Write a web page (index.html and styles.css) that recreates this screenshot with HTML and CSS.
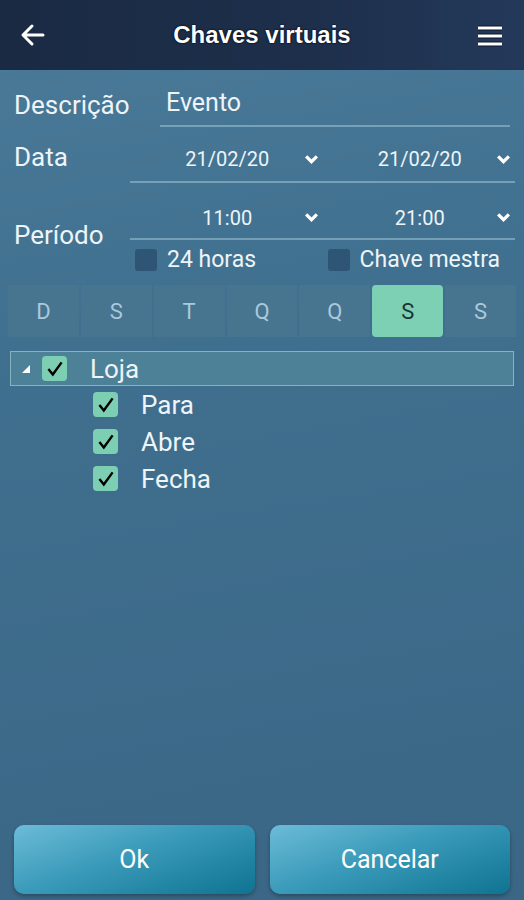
FILE: index.html
```html
<!DOCTYPE html>
<html>
<head>
  <link rel="stylesheet" href="styles.css">
</head>
<body>
  <div class="header">
    <svg class="back" width="26" height="26" viewBox="0 0 26 26">
      <path d="M23 13 H4 M12 4 L3 13 L12 22" stroke="white" stroke-width="3" fill="none" stroke-linecap="round" stroke-linejoin="round"/>
    </svg>
    <div class="title">Chaves virtuais</div>
    <svg class="menu" width="28" height="24" viewBox="0 0 28 24">
      <g stroke="#0d1626" stroke-width="5">
        <line x1="2" y1="4" x2="26" y2="4"/>
        <line x1="2" y1="12" x2="26" y2="12"/>
        <line x1="2" y1="20" x2="26" y2="20"/>
      </g>
      <g stroke="white" stroke-width="3">
        <line x1="2" y1="4" x2="26" y2="4"/>
        <line x1="2" y1="12" x2="26" y2="12"/>
        <line x1="2" y1="20" x2="26" y2="20"/>
      </g>
    </svg>
  </div>

  <div class="form">
    <div class="row desc-row">
      <div class="label desc-label">Descrição</div>
      <div class="text-field">Evento</div>
    </div>

    <div class="row date-row">
      <div class="label">Data</div>
      <div class="pickers">
        <div class="picker">
          <span class="value">21/02/20</span>
          <svg class="chevron" viewBox="0 0 14 10"><path d="M2 2 L7 7 L12 2" stroke="white" stroke-width="3" fill="none"/></svg>
        </div>
        <div class="picker">
          <span class="value">21/02/20</span>
          <svg class="chevron" viewBox="0 0 14 10"><path d="M2 2 L7 7 L12 2" stroke="white" stroke-width="3" fill="none"/></svg>
        </div>
      </div>
    </div>

    <div class="row period-row">
      <div class="label">Período</div>
      <div class="period-fields">
        <div class="pickers time-pickers">
          <div class="picker">
            <span class="value">11:00</span>
            <svg class="chevron" viewBox="0 0 14 10"><path d="M2 2 L7 7 L12 2" stroke="white" stroke-width="3" fill="none"/></svg>
          </div>
          <div class="picker">
            <span class="value">21:00</span>
            <svg class="chevron" viewBox="0 0 14 10"><path d="M2 2 L7 7 L12 2" stroke="white" stroke-width="3" fill="none"/></svg>
          </div>
        </div>
        <div class="options">
          <label class="option"><span class="box"></span>24 horas</label>
          <label class="option"><span class="box"></span>Chave mestra</label>
        </div>
      </div>
    </div>

    <div class="days">
      <div class="day">D</div>
      <div class="day">S</div>
      <div class="day">T</div>
      <div class="day">Q</div>
      <div class="day">Q</div>
      <div class="day selected">S</div>
      <div class="day">S</div>
    </div>

    <div class="tree">
      <div class="node root">
        <svg class="expander" width="10" height="10" viewBox="0 0 10 10"><polygon points="9,1 9,9 1,9" fill="white"/></svg>
        <span class="check"><svg width="22" height="22" viewBox="0 0 20 20"><path d="M4 10 L8 15 L16 4" stroke="black" stroke-width="2.2" fill="none"/></svg></span>
        <span class="node-text">Loja</span>
      </div>
      <div class="node child">
        <span class="check"><svg width="22" height="22" viewBox="0 0 20 20"><path d="M4 10 L8 15 L16 4" stroke="black" stroke-width="2.2" fill="none"/></svg></span>
        <span class="node-text">Para</span>
      </div>
      <div class="node child">
        <span class="check"><svg width="22" height="22" viewBox="0 0 20 20"><path d="M4 10 L8 15 L16 4" stroke="black" stroke-width="2.2" fill="none"/></svg></span>
        <span class="node-text">Abre</span>
      </div>
      <div class="node child">
        <span class="check"><svg width="22" height="22" viewBox="0 0 20 20"><path d="M4 10 L8 15 L16 4" stroke="black" stroke-width="2.2" fill="none"/></svg></span>
        <span class="node-text">Fecha</span>
      </div>
    </div>
  </div>

  <div class="buttons">
    <div class="button">Ok</div>
    <div class="button">Cancelar</div>
  </div>
</body>
</html>
```

FILE: styles.css
```css
body {
  margin: 0;
  height: 900px;
  display: flex;
  flex-direction: column;
  font-family: Roboto, "Noto Sans", sans-serif;
  color: #eef4f8;
  background: linear-gradient(170deg, #4b7b99 0%, #40708f 35%, #3b6686 100%);
  overflow: hidden;
}

.header {
  height: 70px;
  flex-shrink: 0;
  display: flex;
  align-items: center;
  justify-content: space-between;
  padding: 0 20px 0 20px;
  background: linear-gradient(90deg, #1a2a43 0%, #1d2f4b 60%, #24395a 100%);
}

.title {
  font-family: "Liberation Sans", Arial, sans-serif;
  font-weight: bold;
  font-size: 24px;
  color: white;
  text-shadow: 0 0 2px #000, 0 0 1px #000;
  margin-left: 2px;
}

.menu {
  margin-top: 1px;
}

.form {
  flex: 1;
}

.row {
  display: flex;
  align-items: center;
}

.label {
  font-size: 26px;
  width: 116px;
  padding-left: 14px;
  flex-shrink: 0;
}

.desc-row {
  margin-top: 12px;
}

.desc-label {
  width: 146px;
}

.text-field {
  flex: 1;
  margin-right: 14px;
  font-size: 25px;
  padding: 6px 0 8px 6px;
  border-bottom: 2px solid rgba(160, 195, 215, 0.55);
}

.date-row {
  margin-top: 4px;
}

.pickers {
  flex: 1;
  display: flex;
  margin-right: 9px;
  border-bottom: 2px solid rgba(160, 195, 215, 0.55);
}

.picker {
  flex: 1;
  display: flex;
  align-items: center;
  height: 50px;
  padding-top: 6px;
  box-sizing: border-box;
}

.value {
  flex: 1;
  text-align: center;
  padding-left: 26px;
  font-size: 20px;
}

.chevron {
  width: 15px;
  height: 11px;
  flex-shrink: 0;
  margin: 0 4px 0 5px;
}

.period-row {
  margin-top: 14px;
}

.period-fields {
  flex: 1;
  display: flex;
  flex-direction: column;
}

.time-pickers .picker {
  height: 41px;
  padding-top: 0;
}

.options {
  display: flex;
  margin-right: 9px;
  padding-top: 6px;
}

.option {
  flex: 1;
  display: flex;
  align-items: center;
  font-size: 23px;
  padding-left: 5px;
}

.box {
  width: 22px;
  height: 22px;
  border-radius: 3px;
  background: #2f5575;
  margin-right: 10px;
}

.days {
  display: flex;
  gap: 2px;
  margin: 12px 8px 0 8px;
}

.day {
  flex: 1;
  height: 52px;
  display: flex;
  align-items: center;
  justify-content: center;
  font-size: 22px;
  color: #a9c9de;
  background: #47748f;
}

.day.selected {
  background: #7dd0b4;
  color: #1b3535;
  border-radius: 4px;
}

.tree {
  margin-top: 14px;
}

.node {
  display: flex;
  align-items: center;
}

.node.root {
  margin: 0 10px;
  height: 35px;
  border: 1px solid #86b3bf;
  background: #4d8197;
  box-sizing: border-box;
}

.expander {
  margin-left: 10px;
  margin-right: 11px;
}

.check {
  width: 25px;
  height: 25px;
  border-radius: 4px;
  background: #7dcfb3;
  display: flex;
  align-items: center;
  justify-content: center;
  flex-shrink: 0;
}

.node-text {
  font-size: 26px;
  margin-left: 23px;
}

.node.child {
  height: 37px;
  padding-left: 93px;
}

.node.child:first-of-type {
  margin-top: 2px;
}

.buttons {
  display: flex;
  gap: 15px;
  padding: 0 14px 6px 14px;
}

.button {
  flex: 1;
  height: 69px;
  display: flex;
  align-items: center;
  justify-content: center;
  font-size: 25px;
  color: white;
  border-radius: 10px;
  background: linear-gradient(160deg, #6cbcd8 0%, #3a9ab9 45%, #0f7392 100%);
  box-shadow: 0 2px 4px rgba(0, 0, 0, 0.3);
}
```
